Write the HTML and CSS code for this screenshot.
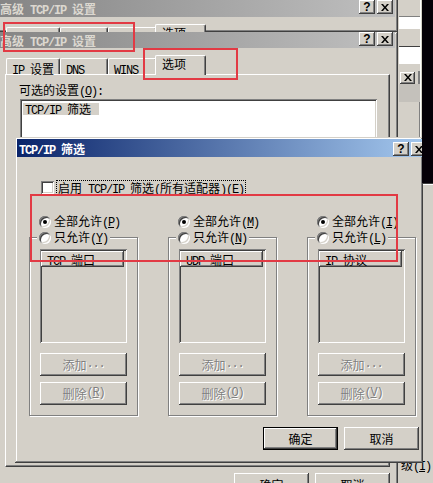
FILE: index.html
```html
<!DOCTYPE html>
<html lang="zh-CN">
<head>
<meta charset="utf-8">
<title>TCP/IP 筛选</title>
<link rel="stylesheet" href="styles.css">
</head>
<body>
<main class="desktop">

  <aside class="backwin">
    <div class="bw-top">
      <div class="bw-s1"></div>
      <div class="bw-s2"></div>
      <div class="bw-s3"></div>
      <div class="bw-s4"></div>
      <div class="bw-s5"></div>
      <div class="bw-s6"><span class="cb small"><svg width="8" height="7" viewBox="0 0 8 7"><path d="M0 0h2l2 2.4 2-2.4h2l-3 3.5 3 3.5h-2l-2-2.4-2 2.4h-2l3-3.5z"/></svg></span></div>
      <div class="bw-s7"></div>
      <div class="bw-s8"></div>
    </div>
    <div class="bw-d"><span class="bw-label">级<span class="l">(<u>I</u>):</span></span></div>
  </aside>

  <section class="win win-a">
    <header class="caption inactive">
      <span class="ctitle">高级<span class="l"> TCP/IP </span>设置</span>
      <span class="cbtns">
        <span class="cb"><span class="q">?</span></span>
        <span class="cb"><svg width="8" height="7" viewBox="0 0 8 7"><path d="M0 0h2l2 2.4 2-2.4h2l-3 3.5 3 3.5h-2l-2-2.4-2 2.4h-2l3-3.5z"/></svg></span>
      </span>
    </header>
    <nav class="tabs">
      <span class="tab t1"><span class="l">IP </span>设置</span>
      <span class="tab t2"><span class="l">DNS</span></span>
      <span class="tab t3"><span class="l">WINS</span></span>
      <span class="tab sel">选项</span>
    </nav>
  </section>

  <section class="win win-b">
    <header class="caption inactive">
      <span class="ctitle">高级<span class="l"> TCP/IP </span>设置</span>
      <span class="cbtns">
        <span class="cb"><span class="q">?</span></span>
        <span class="cb"><svg width="8" height="7" viewBox="0 0 8 7"><path d="M0 0h2l2 2.4 2-2.4h2l-3 3.5 3 3.5h-2l-2-2.4-2 2.4h-2l3-3.5z"/></svg></span>
      </span>
    </header>
    <nav class="tabs">
      <span class="tab t1"><span class="l">IP </span>设置</span>
      <span class="tab t2"><span class="l">DNS</span></span>
      <span class="tab t3"><span class="l">WINS</span></span>
      <span class="tab sel">选项</span>
    </nav>
    <div class="page">
      <div class="lbl">可选的设置<span class="l">(<u>O</u>):</span></div>
      <div class="listbox"><span class="item"><span class="l">TCP/IP </span>筛选</span></div>
    </div>
    <div class="actions">
      <span class="btn">确定</span>
      <span class="btn">取消</span>
    </div>
  </section>

  <section class="win win-c">
    <header class="caption active">
      <span class="ctitle"><span class="l">TCP/IP </span>筛选</span>
      <span class="cbtns">
        <span class="cb"><span class="q">?</span></span>
        <span class="cb"><svg width="8" height="7" viewBox="0 0 8 7"><path d="M0 0h2l2 2.4 2-2.4h2l-3 3.5 3 3.5h-2l-2-2.4-2 2.4h-2l3-3.5z"/></svg></span>
      </span>
    </header>
    <div class="dlg">
      <div class="chkrow">
        <span class="chk"></span>
        <span class="focus">启用<span class="l"> TCP/IP </span>筛选<span class="l">(</span>所有适配器<span class="l">)(<u>E</u>)</span></span>
      </div>
      <div class="cols">
        <div class="col">
          <div class="radio-row"><span class="radio on"></span><span>全部允许<span class="l">(<u>P</u>)</span></span></div>
          <fieldset class="grp">
            <legend><span class="radio"></span><span>只允许<span class="l">(<u>Y</u>)</span></span></legend>
            <div class="lv"><div class="lvh"><span class="l">TCP </span>端口</div></div>
            <span class="btn dis first">添加<span class="l">...</span></span>
            <span class="btn dis">删除<span class="l">(<u>R</u>)</span></span>
          </fieldset>
        </div>
        <div class="col">
          <div class="radio-row"><span class="radio on"></span><span>全部允许<span class="l">(<u>M</u>)</span></span></div>
          <fieldset class="grp">
            <legend><span class="radio"></span><span>只允许<span class="l">(<u>N</u>)</span></span></legend>
            <div class="lv"><div class="lvh"><span class="l">UDP </span>端口</div></div>
            <span class="btn dis first">添加<span class="l">...</span></span>
            <span class="btn dis">删除<span class="l">(<u>O</u>)</span></span>
          </fieldset>
        </div>
        <div class="col">
          <div class="radio-row"><span class="radio on"></span><span>全部允许<span class="l">(<u>I</u>)</span></span></div>
          <fieldset class="grp">
            <legend><span class="radio"></span><span>只允许<span class="l">(<u>L</u>)</span></span></legend>
            <div class="lv"><div class="lvh"><span class="l">IP </span>协议</div></div>
            <span class="btn dis first">添加<span class="l">...</span></span>
            <span class="btn dis">删除<span class="l">(<u>V</u>)</span></span>
          </fieldset>
        </div>
      </div>
      <div class="okrow">
        <span class="btn def">确定</span>
        <span class="btn">取消</span>
      </div>
    </div>
  </section>

  <div class="void"></div>

  <div class="mark m1"></div>
  <div class="mark m2"></div>
  <div class="mark m3"></div>
</main>
</body>
</html>
```

FILE: styles.css
```css
* { box-sizing: border-box; }
html, body { margin: 0; padding: 0; }
body {
  width: 433px;
  height: 483px;
  overflow: hidden;
  background: #d4d0c8;
  font-family: "Noto Sans CJK SC", sans-serif;
  font-size: 12px;
  line-height: 13px;
  color: #000;
}
u { text-decoration: underline; text-underline-offset: 1px; }
.desktop { position: relative; width: 433px; height: 483px; overflow: hidden; background: #d4d0c8; }
.l { font-family: "Liberation Mono", monospace; font-size: 12px; letter-spacing: -1.2px; }

/* background windows on the right */
.backwin {
  position: absolute; z-index: 0; left: 398px; top: 0; width: 35px; height: 483px;
  display: flex; flex-direction: column; background: #d4d0c8;
}
.bw-top { height: 183px; width: 23px; display: flex; flex-direction: column; border-right: 1px solid #fff; padding-left: 1px; }
.bw-s1 { height: 17px; border-bottom: 1px solid #808080; }
.bw-s2 { height: 12px; background: #fff; }
.bw-s3 { height: 18px; border-bottom: 1px solid #404040; border-top: 1px solid #d4d0c8; }
.bw-s4 { height: 17px; background: #fff; }
.bw-s5 { height: 7px; }
.bw-s6 { height: 13px; display: flex; align-items: center; padding-left: 1px; border-right: 2px solid #808080; }
.bw-s7 { height: 18px; background: #c4c1bb; }
.bw-s8 { flex: 1; border-right: 1px solid #808080; }
.bw-d {
  flex: 1; border-top: 1px solid #404040; box-shadow: inset 0 1px #fff;
  display: flex; flex-direction: column; justify-content: flex-end; padding: 0 0 9px 3px;
}
.bw-label { white-space: nowrap; }
.void { position: absolute; z-index: 4; left: 422px; top: 0; width: 11px; height: 183px; background: #050008; }

/* windows */
.win {
  position: absolute;
  display: flex; flex-direction: column;
  background: #d4d0c8;
  padding: 3px;
  box-shadow: inset -1px -1px #404040, inset 1px 1px #d4d0c8, inset -2px -2px #808080, inset 2px 2px #fff;
}
.win-a { z-index: 1; left: -5px; top: -3px; width: 403px; height: 35px; overflow: hidden; }
.win-b { z-index: 2; left: -5px; top: 32px; width: 403px; height: 460px; padding-top: 0; }
.win-c { z-index: 3; left: 15px; top: 137px; width: 408px; height: 326px; padding: 2px; }

.caption {
  flex: none; display: flex; align-items: flex-start;
  height: 16px; padding: 0 2px; font-weight: bold; white-space: nowrap;
}
.caption .ctitle { flex: 1; padding-top: 2px; }
.caption.inactive { background: linear-gradient(to right, #858585, #c0c0c0); color: #dcd8d0; }
.win-a .caption { height: 17px; }
.caption.active {
  height: 18px; margin-right: -8px;
  background: linear-gradient(to right, #0a246a, #a6caf0); color: #fff;
}
.caption.active .ctitle { padding-top: 3px; }
.cbtns { display: flex; gap: 2px; padding-top: 0; }
.caption.active .cbtns { padding-top: 3px; }
.cb {
  width: 16px; height: 14px; background: #d4d0c8;
  display: flex; align-items: center; justify-content: center;
  box-shadow: inset -1px -1px #404040, inset 1px 1px #fff, inset -2px -2px #808080;
  color: #000;
}
.cb.small { width: 15px; height: 12px; }
.cb svg { display: block; fill: #000; }
.cb .q { font-family: "Liberation Sans", sans-serif; font-weight: bold; font-size: 12px; line-height: 12px; }

/* tabs */
.tabs {
  flex: none; display: flex; align-items: flex-end;
  height: 19px; margin: 7px 0 0 8px; position: relative; z-index: 1; font-weight: normal;
}
.tab {
  height: 16px; padding: 3px 0 0 5px; white-space: nowrap;
  border-top: 1px solid #fff; border-left: 1px solid #fff; border-right: 1px solid #404040;
  border-radius: 2px 2px 0 0; box-shadow: inset -1px 0 #808080; background: #d4d0c8;
}
.t1 { width: 54px; }
.t2 { width: 48px; }
.t3 { width: 49px; }
.tab.sel { width: 51px; height: 20px; margin: 0 0 -1px -2px; padding: 1px 0 0 6px; }

.page {
  flex: none; height: 393px; margin: 0 5px 0 7px;
  border-top: 1px solid #fff; border-left: 1px solid #fff;
  border-right: 1px solid #404040; border-bottom: 1px solid #404040;
  box-shadow: inset -1px -1px #808080;
  padding: 8px 12px 0 14px;
}
.lbl { margin-left: -1px; height: 13px; white-space: nowrap; }
.listbox {
  margin-top: 3px; height: 100px; background: #fff; padding: 3px 3px;
  box-shadow: inset 1px 1px #808080, inset -1px -1px #fff, inset 2px 2px #404040, inset -2px -2px #d4d0c8;
}
.item { display: inline-block; background: #d4d0c8; padding: 0 8px 0 2px; height: 12px; line-height: 12px; white-space: nowrap; }
.actions { display: flex; justify-content: flex-end; gap: 6px; margin: 6px 5px 0 0; }

/* buttons */
.btn {
  display: flex; align-items: center; justify-content: center;
  width: 75px; height: 23px; background: #d4d0c8; white-space: nowrap;
  box-shadow: inset -1px -1px #404040, inset 1px 1px #fff, inset -2px -2px #808080, inset 2px 2px #d4d0c8;
}
.btn.def { box-shadow: inset 0 0 0 1px #000, inset -2px -2px #404040, inset 2px 2px #fff, inset -3px -3px #808080; }
.btn.dis { width: 87px; color: #808080; text-shadow: 1px 1px #fff; margin-top: 6px; }
.btn.dis.first { margin-top: 10px; }

/* filter dialog */
.dlg { flex: 1; padding: 23px 2px 0 12px; display: flex; flex-direction: column; }
.chkrow { display: flex; align-items: center; height: 15px; margin-left: 12px; gap: 2px; }
.chk {
  flex: none; width: 13px; height: 13px; background: #fff;
  box-shadow: inset 1px 1px #808080, inset -1px -1px #fff, inset 2px 2px #404040, inset -2px -2px #d4d0c8;
}
.focus { border: 1px dotted #000; padding: 0 1px; height: 15px; white-space: nowrap; }
.cols { display: grid; grid-template-columns: repeat(3, 109px); column-gap: 30px; margin-top: 20px; }
.col { display: flex; flex-direction: column; }
.radio-row { display: flex; align-items: center; gap: 3px; height: 13px; padding-left: 10px; white-space: nowrap; }
.radio {
  flex: none; position: relative; width: 12px; height: 12px; border-radius: 50%; background: #fff;
  box-shadow: inset 1px 1px #808080, inset -1px -1px #fff, inset 2px 2px #404040, inset -2px -2px #d4d0c8;
}
.radio.on::after {
  content: ""; position: absolute; left: 4px; top: 4px; width: 4px; height: 4px; border-radius: 50%; background: #000;
}
.grp {
  margin: 3px 0 0 0; min-inline-size: 0;
  border: 1px solid #808080;
  box-shadow: inset 1px 1px #fff, 1px 1px #fff;
  padding: 5px 10px 10px 10px;
  display: flex; flex-direction: column;
}
.grp legend {
  display: flex; align-items: center; gap: 3px; height: 13px;
  padding: 0 2px; margin-left: -3px; background: #d4d0c8; white-space: nowrap;
}
.lv {
  height: 94px; padding: 2px 0 0 1px;
  box-shadow: inset 1px 1px #808080, inset -1px -1px #fff, inset 2px 2px #404040, inset -2px -2px #d4d0c8;
}
.lvh {
  width: 83px; height: 16px; padding: 2px 0 0 6px; white-space: nowrap;
  border-right: 1px solid #404040; border-bottom: 1px solid #404040;
  box-shadow: inset 1px 1px #fff, inset -1px -1px #808080;
}
.okrow { display: flex; justify-content: flex-end; gap: 6px; margin-top: 11px; }

/* annotation marks */
.mark { position: absolute; z-index: 5; border: 2px solid #e23a44; }
.m1 { left: 3px; top: 22px; width: 132px; height: 30px; }
.m2 { left: 143px; top: 48px; width: 95px; height: 32px; }
.m3 { left: 30px; top: 194px; width: 368px; height: 68px; }
```
